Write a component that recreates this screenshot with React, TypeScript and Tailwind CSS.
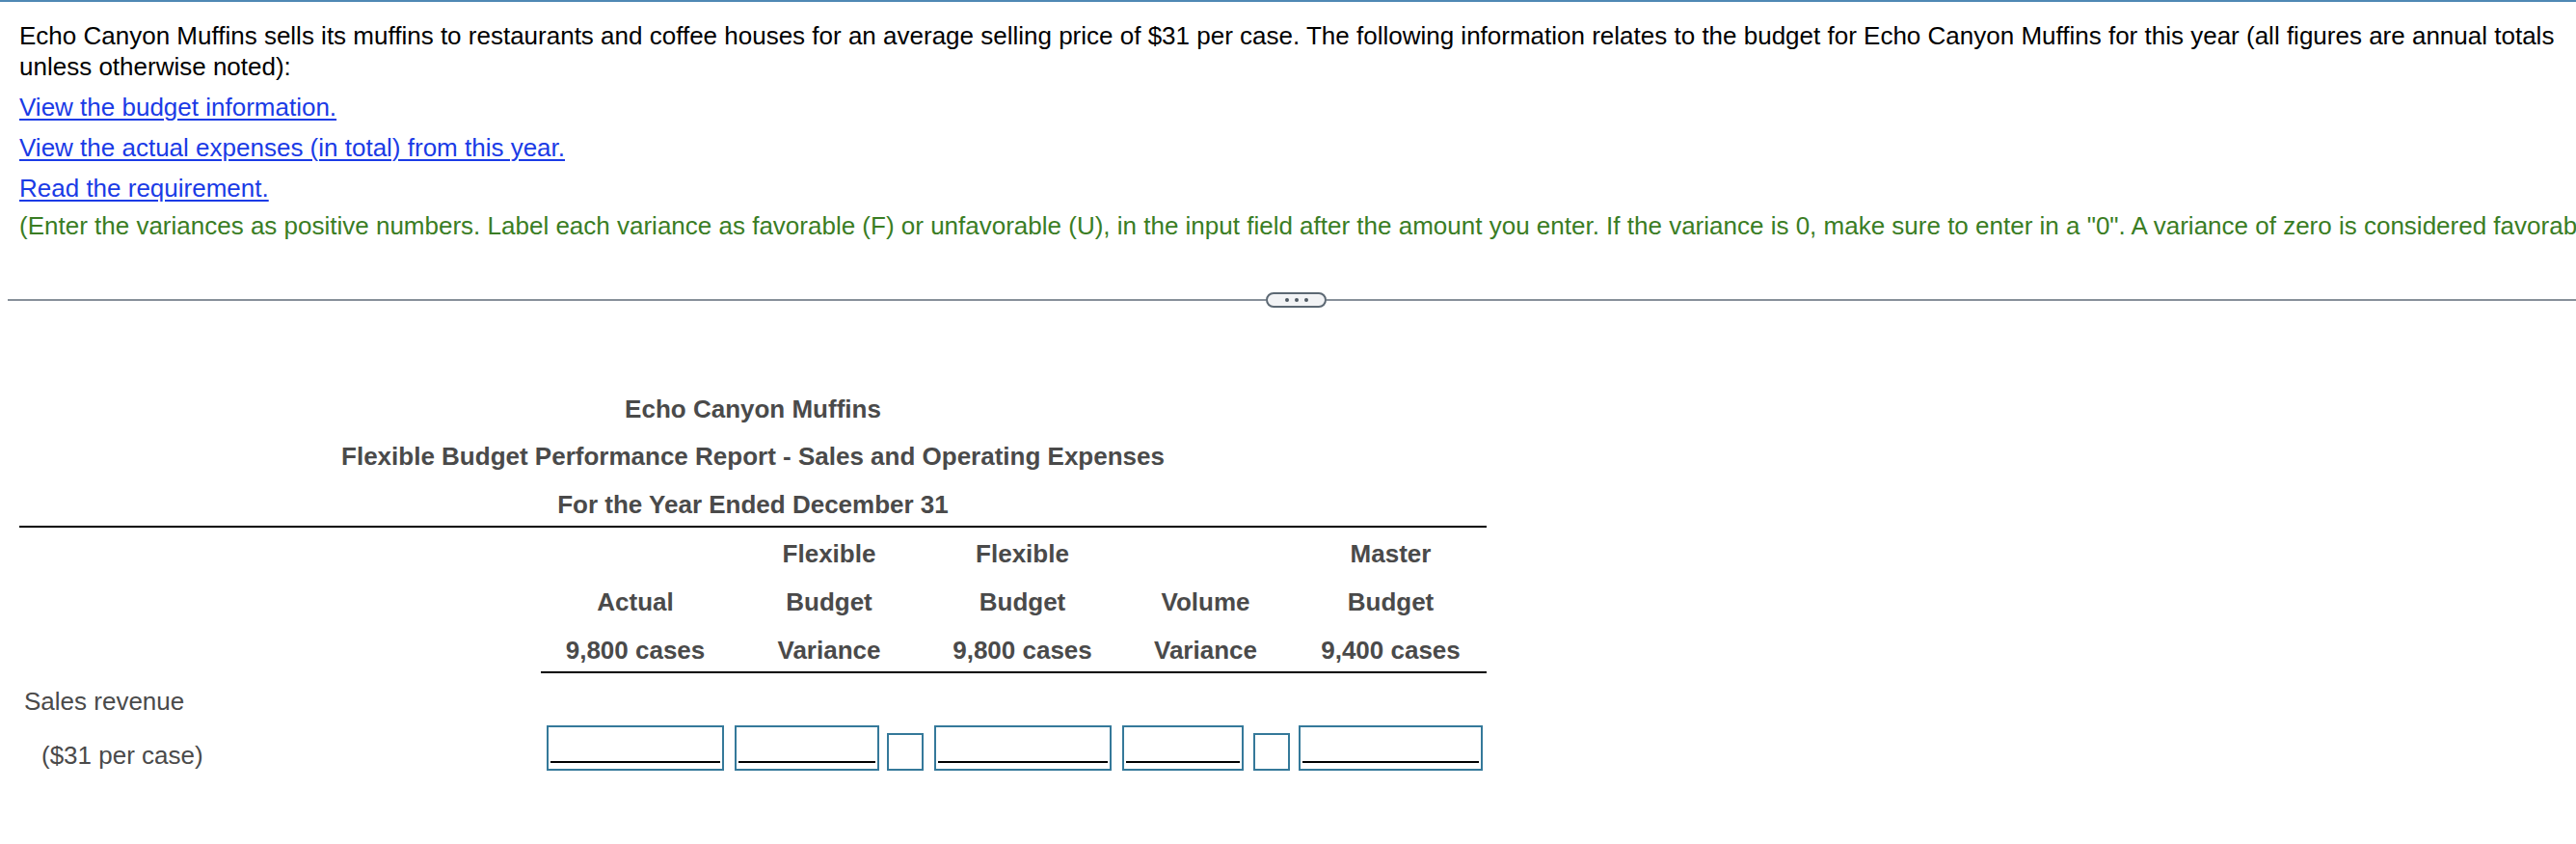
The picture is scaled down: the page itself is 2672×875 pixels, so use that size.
import React from "react";

function Box({ w }: { w: number }) {
  return (
    <div
      className="h-[47px] border-2 border-[#35799a] flex items-end px-[2px] pb-[6px] bg-white"
      style={{ width: w }}
    >
      <div className="h-[2px] w-full bg-black" />
    </div>
  );
}

function SmallBox() {
  return <div className="h-[39px] w-[38px] border-2 border-[#35799a] bg-white" />;
}

const gridCols = "grid grid-cols-[541px_196px_206px_195px_185px_199px]";

export default function App() {
  const head1 = ["", "", "Flexible", "Flexible", "", "Master"];
  const head2 = ["", "Actual", "Budget", "Budget", "Volume", "Budget"];
  const head3 = ["", "9,800 cases", "Variance", "9,800 cases", "Variance", "9,400 cases"];
  return (
    <div className="w-[2672px] h-[875px] overflow-hidden bg-white font-['Liberation_Sans',Arial,sans-serif] text-[26px] leading-[32px]">
      <div className="h-[2px] bg-[#4f88b4]" />
      <div className="pl-[20px] pt-[19px]">
        <p className="whitespace-nowrap text-black">
          Echo Canyon Muffins sells its muffins to restaurants and coffee houses for an average selling price of $31 per case. The following information relates to the budget for Echo Canyon Muffins for this year (all figures are annual totals
          <br />
          unless otherwise noted):
        </p>
        <div className="mt-[10px]">
          <a className="text-[#1a3be6] underline decoration-[2px] underline-offset-[3px]">View the budget information.</a>
        </div>
        <div className="mt-[10px]">
          <a className="text-[#1a3be6] underline decoration-[2px] underline-offset-[3px]">View the actual expenses (in total) from this year.</a>
        </div>
        <div className="mt-[10px]">
          <a className="text-[#1a3be6] underline decoration-[2px] underline-offset-[3px]">Read the requirement.</a>
        </div>
        <div className="mt-[7px] whitespace-nowrap text-[#3a7d24]">
          (Enter the variances as positive numbers. Label each variance as favorable (F) or unfavorable (U), in the input field after the amount you enter. If the variance is 0, make sure to enter in a "0". A variance of zero is considered favorable.)
        </div>
      </div>

      <div className="mt-[53px] h-[16px] flex items-center">
        <div className="ml-[8px] w-[1305px] h-[2px] bg-[#87909a]" />
        <div className="w-[63px] h-[16px] rounded-full border-2 border-[#5c6873] bg-[#f2f3f5] flex items-center justify-center gap-[6px]">
          <span className="w-[4px] h-[4px] rounded-full bg-[#4f5962]" />
          <span className="w-[4px] h-[4px] rounded-full bg-[#4f5962]" />
          <span className="w-[4px] h-[4px] rounded-full bg-[#4f5962]" />
        </div>
        <div className="flex-1 h-[2px] bg-[#87909a]" />
      </div>

      <div className="ml-[20px] w-[1522px] mt-[80px] text-[#4a4a4a]">
        <div className="h-[49px] pt-[9px] text-center font-bold">Echo Canyon Muffins</div>
        <div className="h-[50px] pt-[9px] text-center font-bold">
          Flexible Budget Performance Report - Sales and Operating Expenses
        </div>
        <div className="h-[49px] pt-[9px] text-center font-bold border-b-2 border-black">
          For the Year Ended December 31
        </div>

        <div className={gridCols + " font-bold"}>
          {head1.map((t, i) => (
            <div key={"a" + i} className="h-[50px] pt-[11px] text-center whitespace-nowrap">{t}</div>
          ))}
          {head2.map((t, i) => (
            <div key={"b" + i} className="h-[50px] pt-[11px] text-center whitespace-nowrap">{t}</div>
          ))}
          {head3.map((t, i) => (
            <div
              key={"c" + i}
              className={
                i === 0
                  ? "h-[51px] pt-[11px]"
                  : "h-[51px] pt-[11px] text-center whitespace-nowrap border-b-2 border-black"
              }
            >
              {t}
            </div>
          ))}
        </div>

        <div className="h-[50px] pt-[13px] pl-[5px]">Sales revenue</div>

        <div className={gridCols + " items-end h-[51px]"}>
          <div className="pl-[23px]">($31 per case)</div>
          <div className="flex justify-center">
            <Box w={184} />
          </div>
          <div className="flex justify-center items-end gap-[8px]">
            <Box w={150} />
            <SmallBox />
          </div>
          <div className="flex justify-center">
            <Box w={184} />
          </div>
          <div className="flex justify-center items-end gap-[10px]">
            <Box w={126} />
            <SmallBox />
          </div>
          <div className="flex justify-center">
            <Box w={191} />
          </div>
        </div>
      </div>
    </div>
  );
}
